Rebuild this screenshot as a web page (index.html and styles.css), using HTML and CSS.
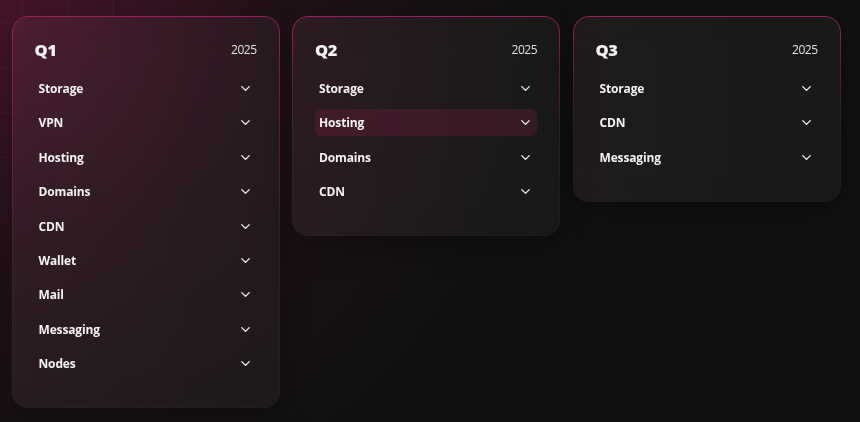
FILE: index.html
```html
<!DOCTYPE html>
<html lang="en">
<head>
<meta charset="utf-8">
<title>Quarterly services</title>
<link rel="stylesheet" href="styles.css">
</head>
<body>
<div class="grid-bg"></div>
<main class="board">
  <section class="card">
    <header class="card-head"><h2>Q1</h2><span class="year">2025</span></header>
    <ul class="rows">
      <li class="row"><span>Storage</span><svg class="chev" viewBox="0 0 24 24"><path d="m6 9 6 6 6-6"/></svg></li>
      <li class="row"><span>VPN</span><svg class="chev" viewBox="0 0 24 24"><path d="m6 9 6 6 6-6"/></svg></li>
      <li class="row"><span>Hosting</span><svg class="chev" viewBox="0 0 24 24"><path d="m6 9 6 6 6-6"/></svg></li>
      <li class="row"><span>Domains</span><svg class="chev" viewBox="0 0 24 24"><path d="m6 9 6 6 6-6"/></svg></li>
      <li class="row"><span>CDN</span><svg class="chev" viewBox="0 0 24 24"><path d="m6 9 6 6 6-6"/></svg></li>
      <li class="row"><span>Wallet</span><svg class="chev" viewBox="0 0 24 24"><path d="m6 9 6 6 6-6"/></svg></li>
      <li class="row"><span>Mail</span><svg class="chev" viewBox="0 0 24 24"><path d="m6 9 6 6 6-6"/></svg></li>
      <li class="row"><span>Messaging</span><svg class="chev" viewBox="0 0 24 24"><path d="m6 9 6 6 6-6"/></svg></li>
      <li class="row"><span>Nodes</span><svg class="chev" viewBox="0 0 24 24"><path d="m6 9 6 6 6-6"/></svg></li>
    </ul>
  </section>
  <section class="card">
    <header class="card-head"><h2>Q2</h2><span class="year">2025</span></header>
    <ul class="rows">
      <li class="row"><span>Storage</span><svg class="chev" viewBox="0 0 24 24"><path d="m6 9 6 6 6-6"/></svg></li>
      <li class="row active"><span>Hosting</span><svg class="chev" viewBox="0 0 24 24"><path d="m6 9 6 6 6-6"/></svg></li>
      <li class="row"><span>Domains</span><svg class="chev" viewBox="0 0 24 24"><path d="m6 9 6 6 6-6"/></svg></li>
      <li class="row"><span>CDN</span><svg class="chev" viewBox="0 0 24 24"><path d="m6 9 6 6 6-6"/></svg></li>
    </ul>
  </section>
  <section class="card">
    <header class="card-head"><h2>Q3</h2><span class="year">2025</span></header>
    <ul class="rows">
      <li class="row"><span>Storage</span><svg class="chev" viewBox="0 0 24 24"><path d="m6 9 6 6 6-6"/></svg></li>
      <li class="row"><span>CDN</span><svg class="chev" viewBox="0 0 24 24"><path d="m6 9 6 6 6-6"/></svg></li>
      <li class="row"><span>Messaging</span><svg class="chev" viewBox="0 0 24 24"><path d="m6 9 6 6 6-6"/></svg></li>
    </ul>
  </section>
</main>
</body>
</html>
```
FILE: styles.css
```css
* { box-sizing: border-box; }

html, body {
  margin: 0;
  height: 100%;
}

body {
  background:
    radial-gradient(circle at 0 0, rgba(120, 25, 65, 0.5) 0, rgba(90, 20, 50, 0.24) 260px, rgba(18, 18, 18, 0) 540px),
    #111111;
  font-family: "Open Sans", Lato, sans-serif;
  color: #f5f3f4;
  overflow: hidden;
}

.grid-bg {
  position: fixed;
  inset: 0;
  background-image:
    linear-gradient(to right, rgba(255, 255, 255, 0.045) 1px, transparent 1px),
    linear-gradient(to bottom, rgba(255, 255, 255, 0.045) 1px, transparent 1px);
  background-size: 45px 45px;
  background-position: 22px 22px;
  -webkit-mask-image: radial-gradient(circle at 0 0, #000 0, rgba(0,0,0,0.6) 180px, transparent 380px);
  mask-image: radial-gradient(circle at 0 0, #000 0, rgba(0,0,0,0.6) 180px, transparent 380px);
  pointer-events: none;
}

.board {
  position: relative;
  display: flex;
  align-items: flex-start;
  gap: 12.5px;
  padding: 16px 0 0 11.5px;
}

.card {
  position: relative;
  width: 268px;
  flex: none;
  border-radius: 16px;
  padding: 21px 23px 31px;
  background: linear-gradient(90deg, rgba(255, 190, 215, 0.06), rgba(255, 245, 248, 0.035) 70%);
  -webkit-backdrop-filter: blur(14px);
  backdrop-filter: blur(14px);
  box-shadow: 0 10px 30px rgba(0, 0, 0, 0.3);
}

/* gradient hairline border */
.card::before {
  content: "";
  position: absolute;
  inset: 0;
  border-radius: inherit;
  padding: 1px;
  background: linear-gradient(180deg, #a31d5a 0, rgba(163, 29, 90, 0.55) 25%, rgba(255, 255, 255, 0.04) 60%, rgba(255, 255, 255, 0.025) 100%);
  -webkit-mask: linear-gradient(#000 0 0) content-box, linear-gradient(#000 0 0);
  -webkit-mask-composite: xor;
  mask: linear-gradient(#000 0 0) content-box exclude, linear-gradient(#000 0 0);
  pointer-events: none;
}

.card-head {
  height: 24px;
  display: flex;
  align-items: center;
  justify-content: space-between;
  margin-bottom: 14px;
}

.card-head h2 {
  margin: 0;
  font-size: 16.5px;
  font-weight: 800;
  letter-spacing: -0.4px;
}

.year {
  font-size: 12px;
  color: #e2e0e1;
  letter-spacing: -0.5px;
}

.rows {
  list-style: none;
  margin: 0;
  padding: 0;
  display: flex;
  flex-direction: column;
  gap: 7.4px;
}

.row {
  height: 27px;
  display: flex;
  align-items: center;
  justify-content: space-between;
  padding: 0 3.5px 0 4px;
  border-radius: 6px;
  font-size: 12px;
  font-weight: 700;
  letter-spacing: -0.15px;
}

.row.active {
  background: rgba(170, 30, 85, 0.2);
}

.chev {
  width: 15px;
  height: 15px;
  fill: none;
  stroke: #f3f1f2;
  stroke-width: 2.2;
  stroke-linecap: round;
  stroke-linejoin: round;
  margin-right: 0.5px;
}
```
